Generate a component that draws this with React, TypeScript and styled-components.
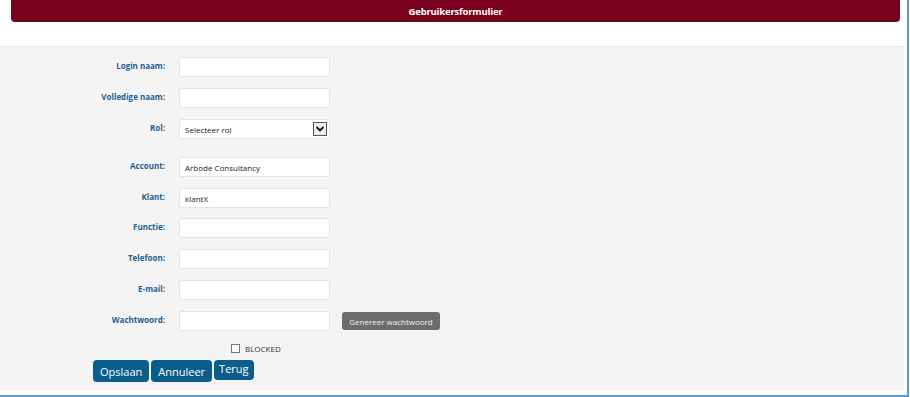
import React from 'react';
import { styled, createGlobalStyle } from 'styled-components';

const GlobalStyle = createGlobalStyle`
  html, body {
    margin: 0;
    padding: 0;
    background: #ffffff;
  }
  body {
    font-family: "Open Sans", "Liberation Sans", sans-serif;
  }
`;

type Field = {
  label: string;
  value?: string;
  kind?: 'input' | 'select' | 'password';
  gap?: number;
};

const fields: Field[] = [
  { label: 'Login naam:' },
  { label: 'Volledige naam:' },
  { label: 'Rol:', value: 'Selecteer rol', kind: 'select' },
  { label: 'Account:', value: 'Arbode Consultancy', gap: 18 },
  { label: 'Klant:', value: 'klantX' },
  { label: 'Functie:', gap: 10 },
  { label: 'Telefoon:' },
  { label: 'E-mail:' },
  { label: 'Wachtwoord:', kind: 'password' },
];

const Chevron = () => (
  <svg width="10" height="8" viewBox="0 0 10 8">
    <path d="M1.5 2 L5 5.5 L8.5 2" fill="none" stroke="#111" strokeWidth="1.8" />
  </svg>
);

const App = () => {
  return (
    <Style.Frame>
      <GlobalStyle />
      <Style.Header>Gebruikersformulier</Style.Header>
      <Style.Panel>
        <Style.Form>
          {fields.map((field, idx) => (
            <Style.Row key={'field-' + idx} $gap={field.gap ?? 11}>
              <Style.Label>{field.label}</Style.Label>
              {field.kind === 'select' ? (
                <Style.SelectBox>
                  <span>{field.value}</span>
                  <Style.ArrowBox>
                    <Chevron />
                  </Style.ArrowBox>
                </Style.SelectBox>
              ) : (
                <Style.Input
                  type={field.kind === 'password' ? 'password' : 'text'}
                  defaultValue={field.value || ''}
                />
              )}
              {field.kind === 'password' && (
                <Style.GenerateBtn>Genereer wachtwoord</Style.GenerateBtn>
              )}
            </Style.Row>
          ))}
          <Style.CheckRow>
            <Style.CheckBox />
            <Style.CheckLabel>BLOCKED</Style.CheckLabel>
          </Style.CheckRow>
          <Style.Actions>
            <Style.ActionBtn>Opslaan</Style.ActionBtn>
            <Style.ActionBtn>Annuleer</Style.ActionBtn>
            <Style.ActionBtn $short>Terug</Style.ActionBtn>
          </Style.Actions>
        </Style.Form>
      </Style.Panel>
    </Style.Frame>
  );
};

export default App;

const Style = {
  Frame: styled.div`
    width: 907px;
    height: 395px;
    border-right: 2px solid #5b9bd5;
    border-bottom: 2px solid #5b9bd5;
    display: flex;
    flex-direction: column;
    background: #ffffff;
  `,
  Header: styled.div`
    height: 22px;
    margin: 0 7px 0 11px;
    background: #7a001f;
    border-radius: 0 0 4px 4px;
    color: #ffffff;
    font-size: 9.5px;
    font-weight: 700;
    display: flex;
    align-items: center;
    justify-content: center;
    letter-spacing: -0.2px;
  `,
  Panel: styled.div`
    margin-top: 24px;
    width: 904px;
    height: 343px;
    background: #f4f4f4;
    border-top: 1px solid #ececec;
  `,
  Form: styled.div`
    padding-top: 10px;
    display: flex;
    flex-direction: column;
  `,
  Row: styled.div<{ $gap: number }>`
    display: flex;
    align-items: center;
    height: 20px;
    margin-top: ${({ $gap }) => $gap}px;
    &:first-child {
      margin-top: 0;
    }
  `,
  Label: styled.label`
    width: 165px;
    margin-right: 14px;
    text-align: right;
    font-size: 8px;
    font-weight: 700;
    color: #1f5f92;
    margin-top: -3px;
  `,
  Input: styled.input`
    box-sizing: border-box;
    width: 151px;
    height: 20px;
    margin: 0;
    padding: 0 5px;
    background: #ffffff;
    border: 1px solid #e4e4e4;
    border-radius: 2px;
    font-family: "Open Sans", "Liberation Sans", sans-serif;
    font-size: 8px;
    color: #222222;
    outline: none;
  `,
  SelectBox: styled.div`
    box-sizing: border-box;
    width: 151px;
    height: 20px;
    padding: 0 2px 0 5px;
    background: #ffffff;
    border: 1px solid #e6e6e6;
    border-radius: 2px;
    display: flex;
    align-items: center;
    justify-content: space-between;
    font-size: 8px;
    color: #222222;
  `,
  ArrowBox: styled.div`
    box-sizing: border-box;
    width: 14px;
    height: 14px;
    border: 1px solid #555555;
    background: #ececec;
    display: flex;
    align-items: center;
    justify-content: center;
  `,
  GenerateBtn: styled.button`
    margin-left: 12px;
    height: 18px;
    width: 98px;
    padding: 0;
    border: none;
    border-radius: 3px;
    background: #6d6d6d;
    color: #f2f2f2;
    font-family: "Open Sans", "Liberation Sans", sans-serif;
    font-size: 8px;
  `,
  CheckRow: styled.div`
    display: flex;
    align-items: center;
    margin-top: 12px;
    padding-left: 231px;
    height: 10px;
  `,
  CheckBox: styled.span`
    box-sizing: border-box;
    width: 9px;
    height: 9px;
    border: 1px solid #777777;
    background: #ffffff;
  `,
  CheckLabel: styled.span`
    margin-left: 5px;
    font-size: 8px;
    color: #333333;
  `,
  Actions: styled.div`
    display: flex;
    align-items: flex-start;
    gap: 2px;
    margin-top: 7px;
    padding-left: 93px;
  `,
  ActionBtn: styled.button<{ $short?: boolean }>`
    height: ${({ $short }) => ($short ? '20px' : '22px')};
    padding: ${({ $short }) => ($short ? '0 5px 3px' : '0 7px')};
    border: none;
    border-radius: 4px;
    background: #0b5e8c;
    color: #ffffff;
    font-family: "Open Sans", "Liberation Sans", sans-serif;
    font-size: 11px;
  `,
};
